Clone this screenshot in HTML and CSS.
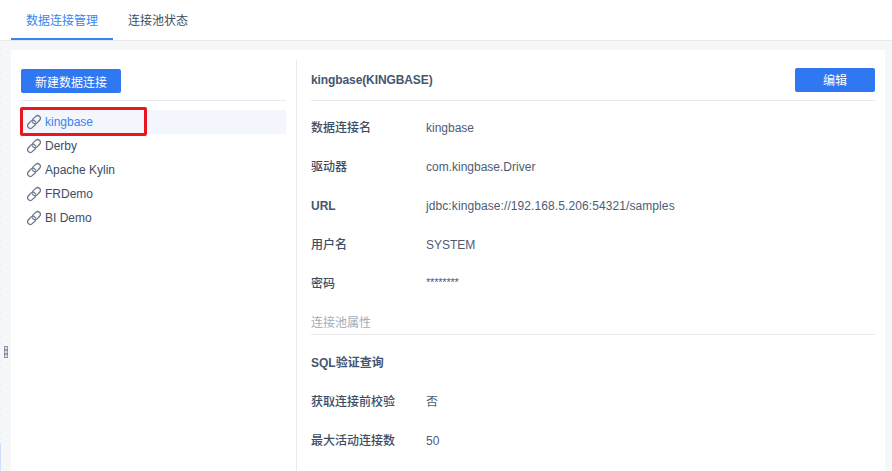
FILE: index.html
```html
<!DOCTYPE html>
<html lang="zh-CN">
<head>
<meta charset="utf-8">
<title>数据连接管理</title>
<link rel="stylesheet" href="styles.css">
</head>
<body>
<svg class="defs" width="0" height="0" aria-hidden="true">
  <symbol id="link" viewBox="0 0 16 16">
    <g fill="none" stroke="currentColor" stroke-width="1.3" stroke-linecap="round">
      <path d="M6.6 5.4 9.7 2.4a2.8 2.8 0 0 1 3.9 0 2.7 2.7 0 0 1 0 3.9L11 8.9a2.8 2.8 0 0 1-3.9 0 2.6 2.6 0 0 1-.6-1"/>
      <path d="M9.4 10.6 6.3 13.6a2.8 2.8 0 0 1-3.9 0 2.7 2.7 0 0 1 0-3.9L5 7.1a2.8 2.8 0 0 1 3.9 0 2.6 2.6 0 0 1 .6 1"/>
    </g>
  </symbol>
</svg>
<div class="edge-strip"></div>
<div class="grip"></div>
<header class="tabs">
  <div class="tab active">数据连接管理</div>
  <div class="tab">连接池状态</div>
</header>
<main class="panel">
  <aside class="side">
    <div class="side-head"><button class="btn btn-new">新建数据连接</button></div>
    <ul class="conn-list">
      <li class="conn selected"><svg class="ico"><use href="#link"/></svg>kingbase</li>
      <li class="conn"><svg class="ico"><use href="#link"/></svg>Derby</li>
      <li class="conn"><svg class="ico"><use href="#link"/></svg>Apache Kylin</li>
      <li class="conn"><svg class="ico"><use href="#link"/></svg>FRDemo</li>
      <li class="conn"><svg class="ico"><use href="#link"/></svg>BI Demo</li>
    </ul>
    <div class="highlight"></div>
  </aside>
  <section class="detail">
    <div class="detail-head">
      <h2 class="detail-title">kingbase(KINGBASE)</h2>
      <button class="btn btn-edit">编辑</button>
    </div>
    <div class="rows rows-first">
      <div class="row"><span class="label">数据连接名</span><span class="value">kingbase</span></div>
      <div class="row"><span class="label">驱动器</span><span class="value">com.kingbase.Driver</span></div>
      <div class="row"><span class="label label-latin">URL</span><span class="value value-url">jdbc:kingbase://192.168.5.206:54321/samples</span></div>
      <div class="row"><span class="label">用户名</span><span class="value">SYSTEM</span></div>
      <div class="row"><span class="label">密码</span><span class="value value-secret">********</span></div>
    </div>
    <div class="section-title">连接池属性</div>
    <div class="rows rows-pool">
      <div class="row"><span class="label label-latin">SQL验证查询</span><span class="value"></span></div>
      <div class="row"><span class="label">获取连接前校验</span><span class="value">否</span></div>
      <div class="row"><span class="label">最大活动连接数</span><span class="value">50</span></div>
    </div>
  </section>
</main>
</body>
</html>
```
FILE: styles.css
```css
* { box-sizing: border-box; }
html, body { height: 100%; }
body {
  margin: 0;
  height: 471px;
  overflow: hidden;
  background: repeating-linear-gradient(#e2e5ea 0 1px, transparent 1px 6px) 0 0 / 1px 100% no-repeat, #f5f7f9;
  color: #3d4d66;
  font-family: "Liberation Sans", "Noto Sans CJK SC", sans-serif;
  font-size: 12px;
  position: relative;
}
.defs { position: absolute; }
.edge-strip {
  position: absolute;
  left: 0;
  top: 443px;
  width: 1px;
  height: 28px;
  background: #cfe0ff;
}
.grip {
  position: absolute;
  left: 4px;
  top: 346px;
  width: 4px;
  height: 12px;
  background:
    linear-gradient(rgba(90,102,128,.5) 1px, transparent 1px 3px, rgba(90,102,128,.5) 3px) 0 0 / 4px 4px,
    linear-gradient(90deg, rgba(90,102,128,.5) 1px, transparent 1px 3px, rgba(90,102,128,.5) 3px) 0 0 / 4px 4px,
    #d9dde6;
}
.tabs {
  height: 41px;
  background: #fff;
  border-bottom: 1px solid #e8eaee;
  padding-left: 11px;
  display: flex;
}
.tab {
  padding: 2px 15px 0;
  line-height: 38px;
  height: 40px;
  color: #3d4d66;
}
.tab.active {
  width: 102px;
  color: #3685f2;
  border-bottom: 2px solid #3685f2;
}
.panel {
  margin: 9px 7px 0 11px;
  height: 421px;
  background: #fff;
  display: flex;
}
.side {
  position: relative;
  width: 286px;
  padding: 0 10px;
  border-right: 1px solid #e8eaee;
  margin-top: 10px;
}
.side-head {
  height: 41px;
  padding-top: 9px;
  border-bottom: 1px solid #e8eaee;
}
.btn {
  border: 0;
  border-radius: 2px;
  background: #3077f2;
  color: #fff;
  font: inherit;
  height: 24px;
  padding: 0;
}
.btn-new { width: 100px; }
.btn-edit { width: 80px; }
.conn-list {
  list-style: none;
  margin: 9px 0 0;
  padding: 0;
}
.conn {
  height: 24px;
  line-height: 24px;
  padding-left: 5px;
  display: flex;
  align-items: center;
  color: #3d4d66;
}
.conn.selected {
  background: #f3f6fd;
  color: #3685f2;
}
.ico {
  width: 16px;
  height: 16px;
  margin-right: 3px;
  color: #66748a;
}
.highlight {
  position: absolute;
  left: 9px;
  top: 47px;
  width: 127px;
  height: 29px;
  border: 3px solid #e8161f;
  border-radius: 2px;
}
.detail {
  flex: 1;
  padding: 0 10px 0 14px;
}
.detail-head {
  height: 51px;
  border-bottom: 1px solid #e8eaee;
  display: flex;
  justify-content: space-between;
  align-items: center;
  padding-top: 9px;
}
.detail-title {
  margin: 0;
  font-size: 12px;
  font-weight: 700;
  letter-spacing: -0.1px;
  color: #465670;
}
.rows-first { padding-top: 7px; }
.rows-pool { padding-top: 8px; }
.row {
  height: 39px;
  line-height: 16px;
  display: flex;
  align-items: center;
}
.label {
  width: 115px;
  flex: none;
  font-weight: 500;
  color: #3d4d66;
}
.label-latin { font-weight: 700; color: #465670; }
.value { color: #4d5c73; }
.value-url { letter-spacing: 0.09px; }
.value-secret {
  font-size: 11px;
  letter-spacing: -0.2px;
  position: relative;
  top: -2px;
}
.section-title {
  height: 32px;
  padding-top: 10px;
  line-height: 20px;
  color: #a4acb9;
  border-bottom: 1px solid #e8eaee;
}
```
